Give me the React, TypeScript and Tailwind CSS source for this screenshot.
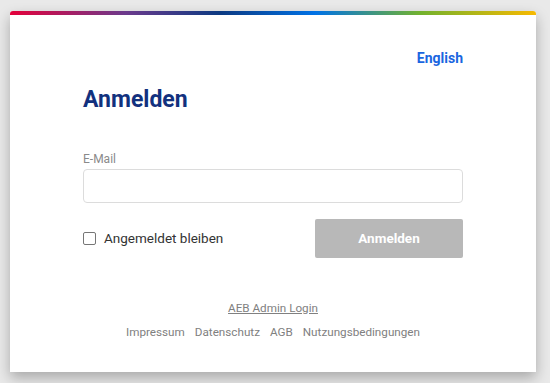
import { useState } from 'react';

const footerLinks = ['Impressum', 'Datenschutz', 'AGB', 'Nutzungsbedingungen'];

const App = () => {
  const [email, setEmail] = useState('');
  const [remember, setRemember] = useState(false);

  return (
    <div
      className="h-[383px] w-[550px] overflow-hidden bg-[#e9e9e9] pl-[10px] pt-[11px]"
      style={{ fontFamily: 'Roboto, "Liberation Sans", sans-serif' }}
    >
      <div className="w-[526px] h-[361px] overflow-hidden rounded-t-[3px] bg-white shadow-[0_6px_14px_rgba(0,0,0,0.28)]">
        <div className="h-[4px] bg-[linear-gradient(90deg,#e4003a_0%,#6b3a8c_22%,#0c3a82_40%,#0072e6_58%,#72b22e_78%,#f7b900_100%)]" />

        <div className="px-[73px]">
          <div className="flex justify-end pt-[33px]">
            <a className="text-[14px] font-bold leading-[20px] text-[#1a66e0]">English</a>
          </div>

          <h1 className="mt-[16px] text-[23px] font-bold leading-[32px] text-[#12317e]">
            Anmelden
          </h1>

          <label className="mt-[35px] block text-[12px] leading-[16px] text-[#8a8a8a]">
            E-Mail
          </label>
          <input
            value={email}
            onChange={(e) => setEmail(e.target.value)}
            className="mt-[2px] block h-[34px] w-full rounded-[4px] border border-[#dcdcdc] px-3 text-[14px] outline-none"
          />

          <div className="mt-[16px] flex items-center justify-between">
            <label className="flex items-center gap-[8px] text-[13.5px] text-[#333]">
              <input
                type="checkbox"
                checked={remember}
                onChange={(e) => setRemember(e.target.checked)}
                className="h-[13px] w-[13px] appearance-none rounded-[2px] border border-[#767676] bg-white"
              />
              Angemeldet bleiben
            </label>
            <button className="h-[39px] w-[148px] rounded-[2px] bg-[#b8b8b8] text-[13.5px] font-bold text-white">
              Anmelden
            </button>
          </div>

          <div className="mt-[42px] flex flex-col items-center gap-[8px] text-[11.7px] text-[#808080]">
            <a className="underline leading-[16px]">AEB Admin Login</a>
            <div className="flex gap-[10px] leading-[16px]">
              {footerLinks.map((l) => (
                <a key={l}>{l}</a>
              ))}
            </div>
          </div>
        </div>
      </div>
    </div>
  );
};

export default App;
